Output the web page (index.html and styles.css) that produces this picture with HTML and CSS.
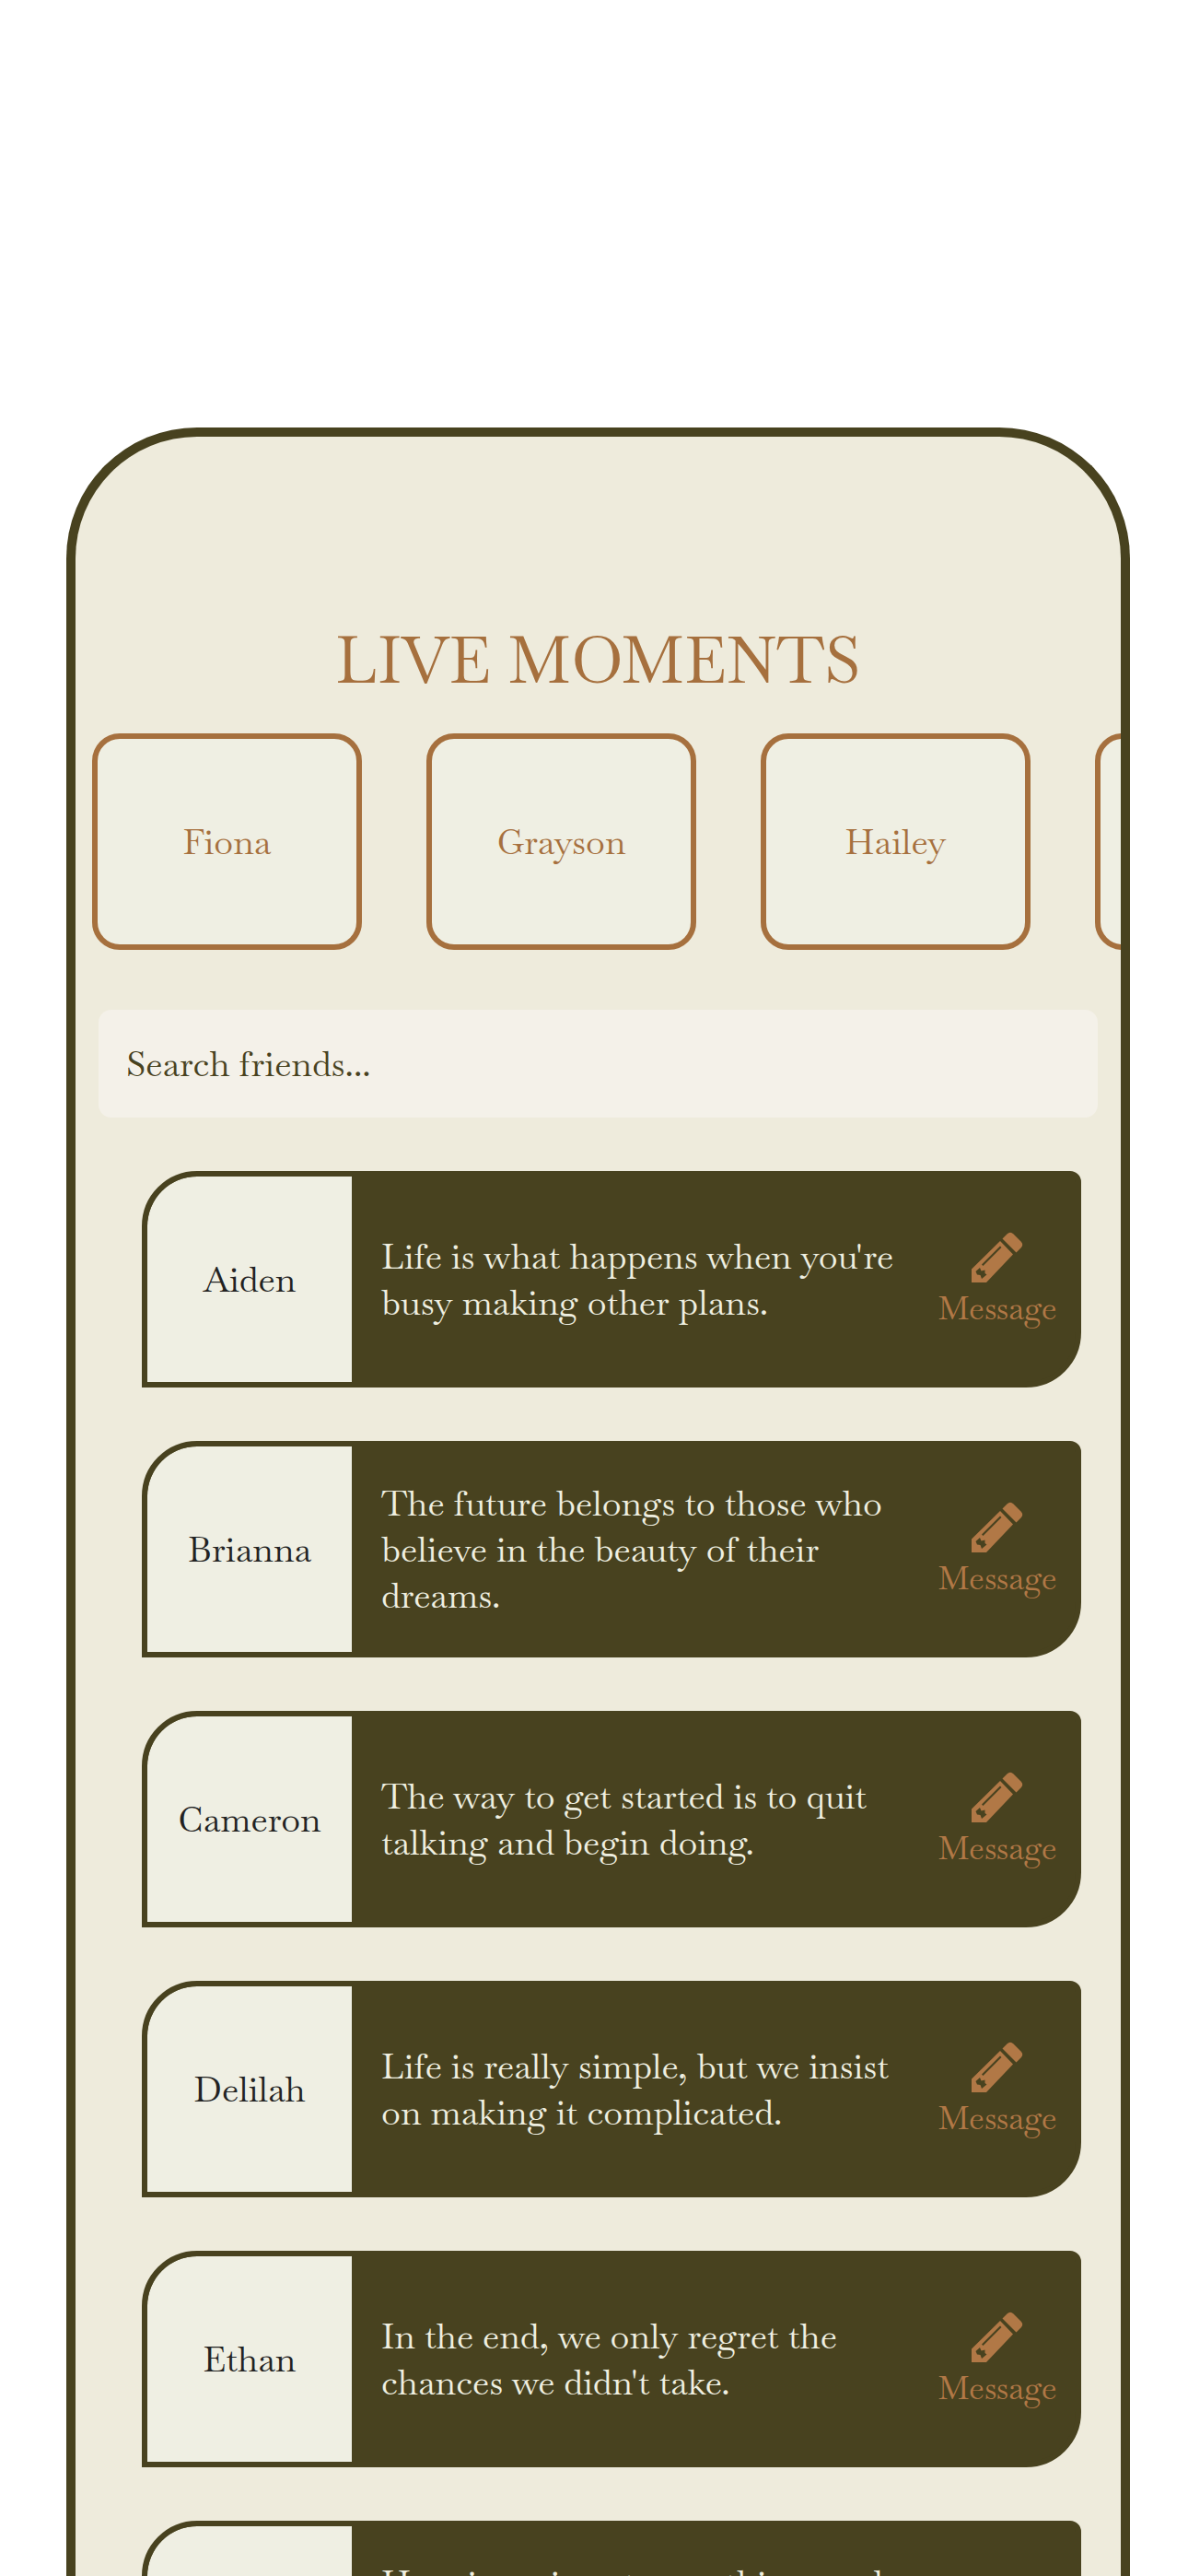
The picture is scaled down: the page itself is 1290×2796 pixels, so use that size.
FILE: index.html
```html
<!DOCTYPE html>
<html lang="en">
<head>
<meta charset="utf-8">
<meta name="viewport" content="width=device-width, initial-scale=1">
<title>Live Moments</title>
<link rel="stylesheet" href="styles.css">
</head>
<body>
<svg class="sprite" aria-hidden="true">
  <symbol id="pencil" viewBox="0 0 56 56">
    <path fill="currentColor" d="M38.500 2.500Q42 -1 45.500 2.500L53.500 10.500Q57 14 53.500 17.500L48.500 22.500L33.500 7.500Z"/>
    <path fill="currentColor" fill-rule="evenodd" d="M31 10L45 24.500L16 55H0V40.500ZM31 15.500L11 35.500L12.500 37L32.500 17ZM9 39L4.500 43L6 46.500L9.500 47L11 51L16.500 46.500L14.500 45V41.500L10.500 42.500Z"/>
  </symbol>
</svg>
<main class="panel">
  <h1 class="title">LIVE MOMENTS</h1>
  <ul class="moments">
    <li class="moment">Fiona</li>
    <li class="moment">Grayson</li>
    <li class="moment">Hailey</li>
    <li class="moment"></li>
  </ul>
  <input class="search" type="search" aria-label="Search friends" placeholder="Search friends...">
  <ul class="friends">
    <li class="friend">
      <h2 class="name">Aiden</h2>
      <p class="quote">Life is what happens when you're busy making other plans.</p>
      <button class="message" type="button"><svg class="icon" aria-hidden="true"><use href="#pencil"/></svg>Message</button>
    </li>
    <li class="friend">
      <h2 class="name">Brianna</h2>
      <p class="quote">The future belongs to those who believe in the beauty of their dreams.</p>
      <button class="message" type="button"><svg class="icon" aria-hidden="true"><use href="#pencil"/></svg>Message</button>
    </li>
    <li class="friend">
      <h2 class="name">Cameron</h2>
      <p class="quote">The way to get started is to quit talking and begin doing.</p>
      <button class="message" type="button"><svg class="icon" aria-hidden="true"><use href="#pencil"/></svg>Message</button>
    </li>
    <li class="friend">
      <h2 class="name">Delilah</h2>
      <p class="quote">Life is really simple, but we insist on making it complicated.</p>
      <button class="message" type="button"><svg class="icon" aria-hidden="true"><use href="#pencil"/></svg>Message</button>
    </li>
    <li class="friend">
      <h2 class="name">Ethan</h2>
      <p class="quote">In the end, we only regret the chances we didn't take.</p>
      <button class="message" type="button"><svg class="icon" aria-hidden="true"><use href="#pencil"/></svg>Message</button>
    </li>
    <li class="friend">
      <h2 class="name">Fiona</h2>
      <p class="quote">Happiness is not something ready made. It comes from your own actions.</p>
      <button class="message" type="button"><svg class="icon" aria-hidden="true"><use href="#pencil"/></svg>Message</button>
    </li>
  </ul>
</main>
</body>
</html>
```
FILE: styles.css
```css
:root {
  --olive: #48421f;
  --cream: #eeebdc;
  --card: #efefe3;
  --copper: #a6703e;
}

* {
  box-sizing: border-box;
}

body {
  display: flex;
  flex-direction: column;
  height: 100vh;
  margin: 0;
  padding: 464px 63px 0 72px;
  overflow: hidden;
  background: #fff;
  font-family: "Baskervville", "Liberation Serif", serif;
  font-size: 38px;
  line-height: 50px;
}

.sprite {
  position: absolute;
  width: 0;
  height: 0;
}

.panel {
  display: flex;
  flex: 1;
  flex-direction: column;
  min-height: 0;
  padding-top: 201px;
  overflow: hidden;
  background: var(--cream);
  border: 10px solid var(--olive);
  border-bottom: 0;
  border-radius: 142px 142px 0 0;
}

.title {
  margin: 0 0 37px;
  color: var(--copper);
  font-size: 70px;
  font-weight: 400;
  line-height: 84px;
  text-align: center;
}

.moments {
  display: flex;
  flex: none;
  gap: 70px;
  margin: 0 0 65px;
  padding: 0 0 0 18px;
  overflow: hidden;
  list-style: none;
}

.moment {
  display: flex;
  flex: 0 0 293px;
  align-items: center;
  justify-content: center;
  height: 235px;
  color: var(--copper);
  background: var(--card);
  border: 6px solid currentColor;
  border-radius: 30px;
}

.search {
  flex: none;
  height: 117px;
  margin: 0 25px 58px;
  padding: 0 30px;
  color: var(--olive);
  background: #f4f1e9;
  border: 0;
  border-radius: 14px;
  font: inherit;
  appearance: none;
}

.search::placeholder {
  color: inherit;
  opacity: 1;
}

.friends {
  display: flex;
  flex: 1;
  flex-direction: column;
  gap: 58px;
  min-height: 0;
  margin: 0;
  padding: 0 43px 0 72px;
  overflow: hidden;
  list-style: none;
}

.friend {
  display: grid;
  flex: none;
  grid-template-columns: 222px 1fr 170px;
  min-height: 235px;
  overflow: hidden;
  color: #efefe0;
  background: var(--olive);
  border: 6px solid var(--olive);
  border-radius: 60px 12px 60px 0;
}

.name {
  display: flex;
  align-items: center;
  justify-content: center;
  margin: 0;
  color: #222;
  background: var(--card);
  border-top-left-radius: 54px;
  font-size: 38px;
  font-weight: 400;
}

.quote {
  align-self: center;
  margin: 0;
  padding-left: 32px;
}

.message {
  display: flex;
  flex-direction: column;
  align-items: center;
  justify-content: center;
  gap: 2px;
  padding: 5px 0 0;
  color: #b17846;
  background: none;
  border: 0;
  font: inherit;
  font-size: 35px;
}

.icon {
  width: 56px;
  height: 56px;
}
```
